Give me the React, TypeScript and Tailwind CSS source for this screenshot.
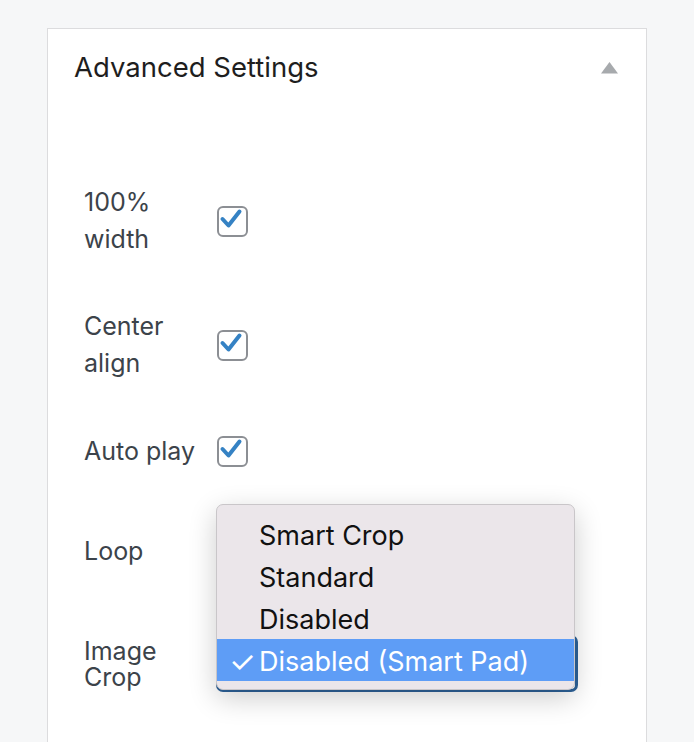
import { Fragment } from "react";

const font = { fontFamily: "Inter, 'Noto Sans', 'Liberation Sans', sans-serif" };

const options = ["Smart Crop", "Standard", "Disabled", "Disabled (Smart Pad)"];

const Checkbox = () => (
  <div className="w-[31px] h-[31px] shrink-0 rounded-[6px] border-2 border-[#8c8f94] bg-white flex items-center justify-center">
    <svg width="27" height="27" viewBox="0 0 27 27" fill="none">
      <path d="M3.5 11 L9.5 17.5 L20.5 3.5" stroke="#3582c4" strokeWidth="4" strokeLinecap="round" strokeLinejoin="round" />
    </svg>
  </div>
);

const Label = ({ children, tight }: { children: React.ReactNode; tight?: boolean }) => (
  <span
    className={`w-[120px] mr-[13px] shrink-0 text-[25px] text-[#3c434a] ${
      tight ? "leading-[26px]" : "leading-[37px]"
    }`}
  >
    {children}
  </span>
);

const SelectPopup = () => (
  <div className="absolute left-0 top-[-131px] w-[359px] h-[186px] rounded-[7px] border border-[#c9c6c9] bg-[#ebe6ea] py-[8px] shadow-[0_8px_28px_rgba(0,0,0,0.2)] z-10">
    {options.map((opt, i) => {
      const selected = i === options.length - 1;
      return (
        <div
          key={opt}
          className={`relative h-[42px] pl-[42px] pt-[4px] flex items-center text-[27px] leading-[32px] ${
            selected ? "bg-[#5e9df6] text-white" : "text-[#111]"
          }`}
        >
          {selected && <span className="absolute left-[12px] text-[30px]">✓</span>}
          {opt}
        </div>
      );
    })}
  </div>
);

export default function App() {
  return (
    <div className="min-h-screen bg-[#f6f7f8] pl-[47px] pt-[28px] overflow-hidden" style={font}>
      <div className="w-[600px] h-[760px] border border-[#dcdcde] bg-white">
        {/* Panel header */}
        <div className="h-[78px] pl-[26px] pr-[28px] flex items-center justify-between">
          <h2 className="text-[27.5px] text-[#1e1e1e] -mt-[1px]">Advanced Settings</h2>
          <svg width="17" height="12" viewBox="0 0 17 12">
            <path d="M8.5 0 L17 11.5 L0 11.5 Z" fill="#a7aaad" />
          </svg>
        </div>

        {/* Settings */}
        <div className="pl-[36px] pt-[77px] flex flex-col">
          <div className="flex items-center">
            <Label>100% width</Label>
            <Checkbox />
          </div>
          <div className="flex items-center mt-[50px]">
            <Label>Center align</Label>
            <Checkbox />
          </div>
          <div className="flex items-center mt-[51px]">
            <Label>Auto play</Label>
            <Checkbox />
          </div>
          <div className="flex items-center mt-[63px]">
            <Label>Loop</Label>
            <Checkbox />
          </div>
          <div className="flex items-center mt-[65px]">
            <Label tight>
              <Fragment>Image<br />Crop</Fragment>
            </Label>
            <div className="relative -ml-[1px]">
              <div className="w-[362px] h-[57px] rounded-[7px] border-[3px] border-[#2d6299] bg-white" />
              <SelectPopup />
            </div>
          </div>
        </div>
      </div>
    </div>
  );
}
